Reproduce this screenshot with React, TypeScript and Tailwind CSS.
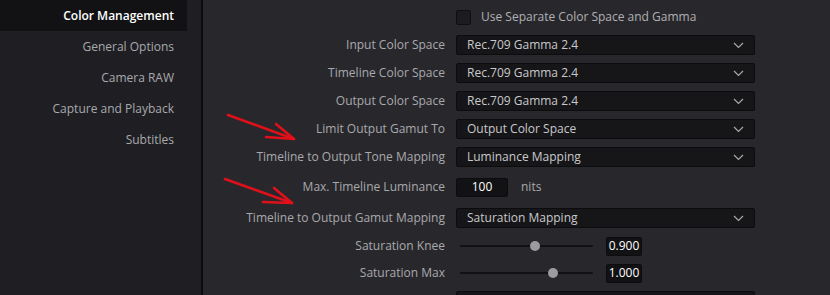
import React from "react";

const navItems = ["Color Management", "General Options", "Camera RAW", "Capture and Playback", "Subtitles"];

function Chevron() {
  return (
    <svg width="11" height="7" viewBox="0 0 11 7" className="shrink-0">
      <path d="M1 1l4.5 4.5L10 1" fill="none" stroke="#a9a9ad" strokeWidth="1.2" />
    </svg>
  );
}

function Select({ value }: { value: string }) {
  return (
    <div className="flex h-[20px] w-[299px] items-center justify-between rounded-[2px] border border-[#0c0c0e] bg-[#161618] pl-[10px] pr-[10px] text-[#c9c9cc]">
      <span>{value}</span>
      <Chevron />
    </div>
  );
}

function Slider({ pos }: { pos: number }) {
  return (
    <div className="relative h-[14px] w-[133px]">
      <div className="absolute left-0 right-0 top-[6px] h-[2px] rounded bg-[#111113]" />
      <div
        className="absolute top-[2px] h-[10px] w-[10px] rounded-full bg-[#9c9ca0]"
        style={{ left: pos - 5 }}
      />
    </div>
  );
}

function Row({ label, h, children }: { label: string; h: string; children?: React.ReactNode }) {
  return (
    <div className={`flex shrink-0 items-center ${h}`}>
      <div className="w-[242px] shrink-0 text-right text-[#a9a9ad]">{label}</div>
      <div className="ml-[11px] flex items-center">{children}</div>
    </div>
  );
}

export default function App() {
  return (
    <div
      className="relative flex h-[295px] w-[830px] overflow-hidden bg-[#28282c] text-[12px]"
      style={{ fontFamily: '"Open Sans", "Noto Sans", sans-serif' }}
    >
      <div className="w-[203px] shrink-0 border-r-2 border-[#0b0b0c] bg-[#1f1f23]">
        {navItems.map((item, i) => (
          <div
            key={item}
            className={`flex h-[31px] w-[187px] items-center justify-end pr-[13px] text-[12px] ${
              i === 0 ? "bg-[#121214] font-semibold text-white" : "text-[#a9a9ad]"
            }`}
          >
            {item}
          </div>
        ))}
      </div>

      <div className="flex flex-1 flex-col overflow-hidden pt-[3px]">
        <Row label="" h="h-[28px]">
          <div className="mr-[10px] h-[15px] w-[15px] rounded-[2px] border border-[#0f0f11] bg-[#1c1c1f]" />
          <span className="text-[#b0b0b4]">Use Separate Color Space and Gamma</span>
        </Row>
        <Row label="Input Color Space" h="h-[28px]">
          <Select value="Rec.709 Gamma 2.4" />
        </Row>
        <Row label="Timeline Color Space" h="h-[28px]">
          <Select value="Rec.709 Gamma 2.4" />
        </Row>
        <Row label="Output Color Space" h="h-[28px]">
          <Select value="Rec.709 Gamma 2.4" />
        </Row>
        <Row label="Limit Output Gamut To" h="h-[28px]">
          <Select value="Output Color Space" />
        </Row>
        <Row label="Timeline to Output Tone Mapping" h="h-[28px]">
          <Select value="Luminance Mapping" />
        </Row>
        <Row label="Max. Timeline Luminance" h="h-[32px]">
          <div className="flex h-[19px] w-[52px] items-center justify-center rounded-[2px] border border-[#0c0c0e] bg-[#121214] font-medium text-white">
            100
          </div>
          <span className="ml-[13px] text-[#a9a9ad]">nits</span>
        </Row>
        <Row label="Timeline to Output Gamut Mapping" h="h-[30px]">
          <Select value="Saturation Mapping" />
        </Row>
        <Row label="Saturation Knee" h="h-[26px]">
          <div className="ml-[4px]">
            <Slider pos={75} />
          </div>
          <div className="ml-[13px] flex h-[19px] w-[36px] items-center justify-center rounded-[2px] border border-[#0c0c0e] bg-[#121214] font-medium text-white">
            0.900
          </div>
        </Row>
        <Row label="Saturation Max" h="h-[28px]">
          <div className="ml-[4px]">
            <Slider pos={93} />
          </div>
          <div className="ml-[13px] flex h-[19px] w-[36px] items-center justify-center rounded-[2px] border border-[#0c0c0e] bg-[#121214] font-medium text-white">
            1.000
          </div>
        </Row>
        <Row label="" h="h-[28px]">
          <Select value="" />
        </Row>
      </div>

      <svg className="pointer-events-none absolute left-0 top-0" width="830" height="295">
        <g fill="none" stroke="#e0101a" strokeWidth="2.6" strokeLinecap="round" strokeLinejoin="round">
          <path d="M228 115L294 139" />
          <path d="M276 124L294 139L266 137" />
          <path d="M225 179L292 203" />
          <path d="M274 188L292 203L263 202" />
        </g>
      </svg>
    </div>
  );
}
